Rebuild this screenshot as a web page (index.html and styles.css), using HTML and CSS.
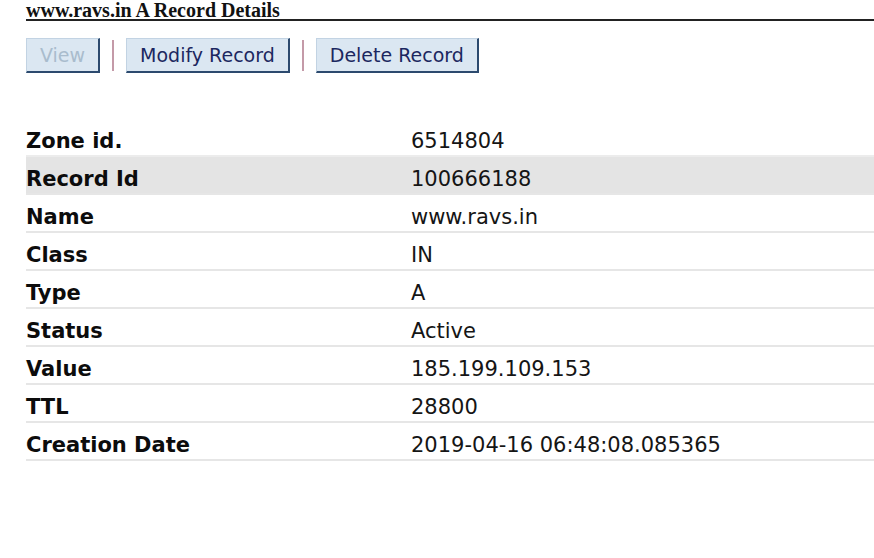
FILE: index.html
```html
<!DOCTYPE html>
<html>
<head>
<meta charset="utf-8">
<link rel="stylesheet" href="styles.css">
</head>
<body>
<div class="page">
  <h1 class="title">www.ravs.in A Record Details</h1>
  <div class="toolbar">
    <span class="btn disabled">View</span>
    <span class="sep"></span>
    <span class="btn">Modify Record</span>
    <span class="sep"></span>
    <span class="btn">Delete Record</span>
  </div>
  <div class="details">
    <div class="row"><div class="label">Zone id.</div><div class="value">6514804</div></div>
    <div class="row alt"><div class="label">Record Id</div><div class="value">100666188</div></div>
    <div class="row"><div class="label">Name</div><div class="value">www.ravs.in</div></div>
    <div class="row"><div class="label">Class</div><div class="value">IN</div></div>
    <div class="row"><div class="label">Type</div><div class="value">A</div></div>
    <div class="row"><div class="label">Status</div><div class="value">Active</div></div>
    <div class="row"><div class="label">Value</div><div class="value">185.199.109.153</div></div>
    <div class="row"><div class="label">TTL</div><div class="value">28800</div></div>
    <div class="row"><div class="label">Creation Date</div><div class="value">2019-04-16 06:48:08.085365</div></div>
  </div>
</div>
</body>
</html>
```
FILE: styles.css
```css
html, body {
  margin: 0;
  padding: 0;
  background: #ffffff;
}
.page {
  padding-left: 26px;
  font-family: "DejaVu Sans", sans-serif;
  color: #111;
}
.title {
  margin: 0;
  font-family: "Liberation Serif", serif;
  font-weight: bold;
  font-size: 20px;
  line-height: 20px;
  height: 19px;
  color: #111;
  border-bottom: 2px solid #222;
}
.toolbar {
  display: flex;
  align-items: center;
  margin-top: 16px;
  height: 36px;
}
.btn {
  display: inline-flex;
  align-items: center;
  justify-content: center;
  box-sizing: border-box;
  height: 35px;
  padding: 0 13px;
  background: #dbe7f2;
  border: 1px solid #c2d3e3;
  border-right: 2px solid #2c4a6e;
  border-bottom: 2px solid #2c4a6e;
  color: #1c2760;
  font-size: 19px;
}
.btn.disabled {
  color: #a9bccd;
}
.sep {
  width: 2px;
  height: 31px;
  margin: 0 12px;
  background: #c49aa8;
}
.details {
  margin-top: 46px;
}
.row {
  display: flex;
  align-items: flex-start;
  box-sizing: border-box;
  height: 38px;
  padding-top: 8px;
  line-height: 28px;
  border-bottom: 2px solid #e6e6e6;
  font-size: 21px;
}
.row:first-child {
  border-bottom-color: #ececec;
}
.row.alt {
  background: #e4e4e4;
}
.label {
  width: 385px;
  font-weight: bold;
  color: #0c0c0c;
}
.value {
  color: #151515;
}
```
